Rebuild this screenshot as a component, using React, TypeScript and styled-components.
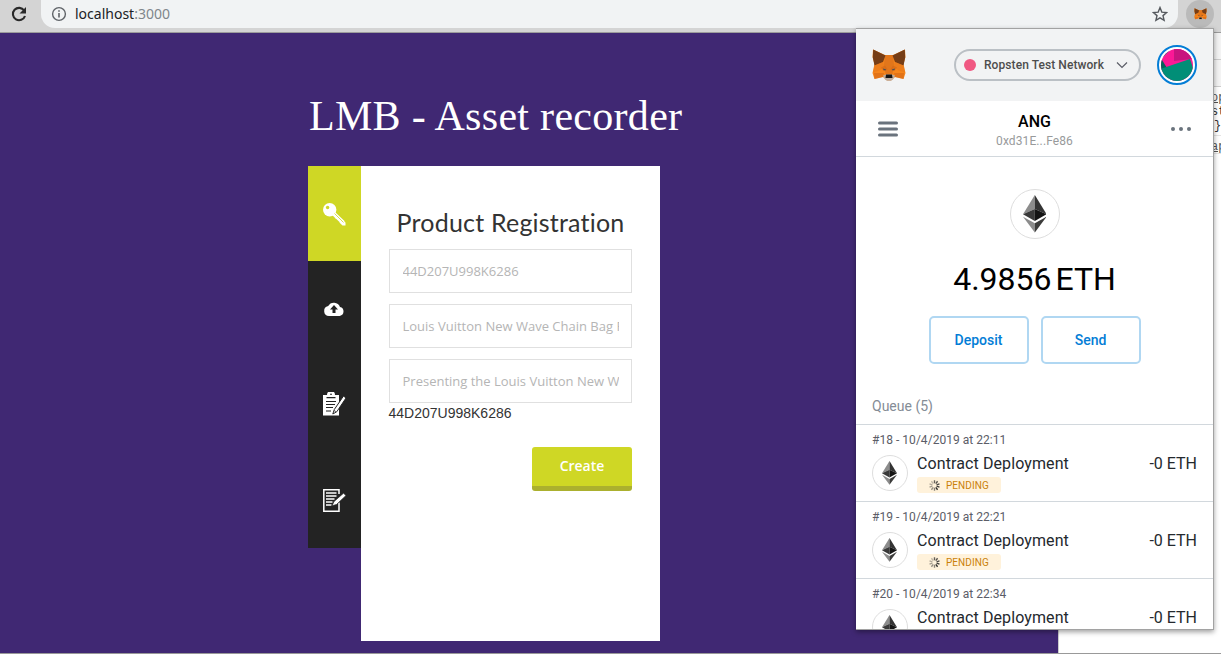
import React from "react";
import styled, { createGlobalStyle } from "styled-components";

const Global = createGlobalStyle`
  * { box-sizing: border-box; }
  body { margin: 0; background: #fff; overflow: hidden; }
  #root { height: 654px; }
`;

const Window = styled.div`
  position: relative;
  display: flex;
  flex-direction: column;
  width: 1221px;
  height: 654px;
  overflow: hidden;
`;

/* Browser toolbar */
const Toolbar = styled.header`
  display: flex;
  align-items: flex-start;
  height: 33px;
  flex: none;
  background: #d4d4d4;
  border-bottom: 1px solid #9c9c9c;
  padding-left: 10px;
`;
const Reload = styled.svg`
  width: 18px;
  height: 18px;
  margin: 5px 13px 0 0;
`;
const AddressBar = styled.div`
  display: flex;
  align-items: center;
  width: 1137px;
  height: 28px;
  padding: 0 10px;
  background: #f1f3f4;
  border-radius: 0 0 14px 14px;
  font: 14px/28px "Noto Sans", sans-serif;
  color: #202124;
  span { color: #80868b; }
  p { flex: 1; margin: 0 0 0 8px; }
`;
const ExtensionSlot = styled.div`
  display: flex;
  align-items: center;
  justify-content: center;
  width: 28px;
  height: 28px;
  margin-left: 8px;
  border-radius: 14px;
  background: #bababa;
`;

const Content = styled.div`
  display: flex;
  flex: 1;
  border-bottom: 1px solid #999;
`;

/* Web page */
const Page = styled.main`
  flex: none;
  width: 1058px;
  padding: 58px 0 0 308px;
  background: #402873;
`;
const PageTitle = styled.h1`
  margin: 0 0 0 1px;
  height: 75px;
  font: 400 42px/50px "Liberation Serif", serif;
  letter-spacing: 0.3px;
  color: #fff;
  white-space: nowrap;
`;
const Card = styled.section`
  display: flex;
  align-items: flex-start;
`;
const Tabs = styled.nav`
  width: 53px;
  height: 382px;
  background: #232323;
`;
const Tab = styled.div<{ $active?: boolean }>`
  display: flex;
  align-items: center;
  justify-content: center;
  height: ${(p) => (p.$active ? 95 : 95.6)}px;
  background: ${(p) => (p.$active ? "#cfd725" : "transparent")};
  svg { width: 24px; height: 24px; margin-right: 1px; }
`;
const Form = styled.form`
  display: flex;
  flex-direction: column;
  width: 299px;
  height: 475px;
  padding: 38px 28px 0;
  background: #fff;
`;
const FormTitle = styled.h2`
  margin: 0 0 9px;
  font: 400 25px/36px Lato, sans-serif;
  letter-spacing: 0.2px;
  color: #333;
  text-align: center;
  white-space: nowrap;
`;
const Field = styled.input`
  width: 243px;
  height: 44px;
  margin: 0 0 11px;
  padding: 0 12.5px;
  border: 1px solid #e0e0e0;
  background: #fff;
  font: 13px "Open Sans", sans-serif;
  &::placeholder { color: #b5b5b5; opacity: 1; }
`;
const Serial = styled.p`
  margin: -11px 0 0 -0.5px;
  font: 14px/20px "Liberation Sans", sans-serif;
  color: #333;
`;
const CreateButton = styled.button`
  align-self: flex-end;
  width: 100px;
  height: 44px;
  margin-top: 24px;
  padding: 0 0 2px;
  border: 0;
  border-bottom: 5px solid #abb02e;
  border-radius: 3px;
  background: #cfd725;
  color: #fff;
  font: 600 14px "Open Sans", sans-serif;
`;

/* Developer tools column */
const DevTools = styled.aside`
  flex: 1;
  border-left: 1px solid #ccc;
  background: #fff;
  font: 12px/13px "Liberation Mono", monospace;
  color: #333;
`;
const DevBar = styled.div`
  height: 27px;
  background: #f3f3f3;
  border-bottom: 1px solid #ccc;
`;
const DevEntry = styled.div<{ $height: number }>`
  height: ${(p) => p.$height}px;
  padding: 5px 0 0 152px;
  border-bottom: 1px solid #e4e4e4;
  white-space: nowrap;
  overflow: hidden;
  u { color: #555; }
  div { height: 14px; }
`;
const Brace = styled.div`
  padding-left: 3px;
`;

/* Wallet popup */
const Popup = styled.div`
  position: absolute;
  left: 856px;
  top: 28px;
  width: 358px;
  height: 602px;
  overflow: hidden;
  background: #fff;
  border: solid #a2a2a2;
  border-width: 1px 1px 1px 0;
  box-shadow: 0 2px 5px rgba(0, 0, 0, 0.38);
  font-family: Roboto, sans-serif;
`;
const PopupHeader = styled.div`
  display: flex;
  align-items: center;
  height: 72px;
  padding: 0 16px;
  background: #f2f3f4;
`;
const Network = styled.div`
  display: flex;
  align-items: center;
  width: 187px;
  height: 32px;
  margin-left: auto;
  padding: 0 11px 0 8px;
  border: 2px solid #bbc0c5;
  border-radius: 16px;
  font-size: 12px;
  font-weight: 500;
  letter-spacing: 0.07px;
  color: #4d4d4d;
  span { flex: 1; margin-left: 8px; white-space: nowrap; }
`;
const Dot = styled.i`
  width: 12px;
  height: 12px;
  border-radius: 50%;
  background: #f05882;
`;
const Avatar = styled.svg`
  width: 40px;
  height: 40px;
  margin-left: 16px;
`;
const AccountBar = styled.div`
  display: flex;
  align-items: center;
  justify-content: space-between;
  height: 56px;
  padding: 0 22px;
  border-bottom: 1px solid #d2d8dd;
`;
const Account = styled.div`
  padding-top: 4px;
  text-align: center;
  strong { display: block; font: 500 16px/20px Roboto, sans-serif; color: #000; }
  span { display: block; font-size: 12px; line-height: 18px; letter-spacing: 0.1px; color: #989a9b; }
`;
const Overview = styled.div`
  display: flex;
  flex-direction: column;
  align-items: center;
  height: 230px;
  padding-top: 32px;
`;
const Token = styled.div<{ $size: number }>`
  display: flex;
  align-items: center;
  justify-content: center;
  flex: none;
  width: ${(p) => p.$size}px;
  height: ${(p) => p.$size}px;
  border: 1px solid #dedede;
  border-radius: 50%;
  svg { height: ${(p) => (p.$size > 40 ? 78 : 70)}%; }
`;
const Balance = styled.div`
  margin: 21px 0 17px;
  font-size: 32px;
  line-height: 39px;
  word-spacing: -4px;
  color: #000;
`;
const Actions = styled.div`
  display: flex;
  gap: 12px;
`;
const Action = styled.button`
  width: 100px;
  height: 48px;
  padding: 0;
  border: 2px solid #b0d7f2;
  border-radius: 5px;
  background: #fff;
  color: #037dd6;
  font: 500 14px Roboto, sans-serif;
`;
const QueueTitle = styled.div`
  height: 37px;
  padding: 10px 16px 0;
  font-size: 14px;
  line-height: 18px;
  color: #848c96;
`;
const Transaction = styled.div`
  height: 77px;
  padding: 7px 16px 0;
  border-top: 1px solid #d2d8dd;
`;
const TxDate = styled.div`
  font-size: 12px;
  line-height: 16px;
  letter-spacing: 0.03px;
  color: #5b5d67;
`;
const TxRow = styled.div`
  display: flex;
  align-items: flex-start;
  padding-top: 7px;
`;
const TxInfo = styled.div`
  flex: 1;
  margin-left: 9px;
`;
const TxName = styled.div`
  height: 21px;
  margin-top: -1px;
  font-size: 16px;
  line-height: 20px;
  letter-spacing: 0.1px;
  color: #24292e;
`;
const TxAmount = styled(TxName)`
  letter-spacing: 0;
`;
const Pending = styled.div`
  display: flex;
  align-items: center;
  width: 84px;
  height: 16px;
  margin-top: 2px;
  padding-left: 12px;
  gap: 6px;
  border-radius: 3px;
  background: #fff2db;
  color: #ca810a;
  font-size: 10px;
  letter-spacing: 0.06px;
`;

const Fox = ({ width, height }: { width: number; height: number }) => (
  <svg width={width} height={height} viewBox="0 0 34 32">
    <path fill="#f6851b" d="M1 .5 13 6h8L33 .5 33.5 8 31.5 15 33.5 24 31.5 30 23 28l-4 3.5h-4L11 28l-8.5 2L.5 24l2-9L.5 8Z" />
    <path fill="#e2761b" d="M13 6h8l1 9-1.5 10h-7L12 15Z" />
    <path fill="#763d16" d="M1.2.5 13.5 6.5 11 13 2.5 16.5.8 8.5Zm31.6 0L20.500 6.5 23 13l8.500 3.500L33.200 8.500Z" />
    <path fill="#e4761b" d="m2.500 16.500 8.500-3.500 2 5-6 3.500-6 2Zm29 0L23 13l-2 5 6 3.500 6 2Z" opacity=".55" />
    <path fill="#cd6116" d="m9 18.500 4-2 2.500 4-4 1.500Zm16 0-4-2-2.500 4 4 1.500ZM2 24h10l-1 4-8.500 2Zm30 0H22l1 4 8.500 2Z" opacity=".5" />
    <path fill="#c0ad9e" d="m11 26.500 3-1h6l3 1-2 4-2 1.300h-4L13 30.500Z" />
    <path fill="#4c4f55" d="m11 19.500 3 .7-.6 1.300-1.900-.5Zm12 0-3 .7.6 1.300 1.900-.5Z" />
    <path fill="#161616" d="M14 25.500h6l.5 3.500h-7Z" />
  </svg>
);

const Ether = () => (
  <svg viewBox="0 0 24 38">
    <path fill="#8c8c8c" d="M12 0 0 19.5l12-5.4Z" />
    <path fill="#343434" d="m12 0 12 19.5-12-5.4Z" />
    <path fill="#393939" d="m0 19.5 12-5.4v12.4Z" />
    <path fill="#141414" d="m24 19.5-12-5.4v12.4Z" />
    <path fill="#8c8c8c" d="m0 22 12 6.7V38Z" />
    <path fill="#3c3c3b" d="m24 22-12 6.7V38Z" />
  </svg>
);

const Spinner = () => (
  <svg width="11" height="11" viewBox="-6 -6 12 12">
    {[0, 1, 2, 3, 4, 5, 6, 7, 8, 9].map((n) => (
      <path
        key={n}
        d="M0-2.4V-5.7"
        stroke="#222"
        strokeWidth="1.5"
        opacity={n < 5 ? 0.7 + n * 0.06 : 0.9 - n * 0.07}
        transform={`rotate(${n * 36})`}
      />
    ))}
  </svg>
);

const queue = [
  { nonce: 18, time: "22:11", status: "PENDING" },
  { nonce: 19, time: "22:21", status: "PENDING" },
  { nonce: 20, time: "22:34" },
];

export default function App() {
  return (
    <Window>
      <Global />
      <Toolbar>
        <Reload viewBox="0 0 18 18">
          <path d="M14.2 5.5A6.2 6.2 0 1 0 15 11" fill="none" stroke="#292929" strokeWidth="2.1" />
          <path d="M16 2v6.5H9.5Z" fill="#292929" />
        </Reload>
        <AddressBar>
          <svg width="16" height="16" viewBox="0 0 16 16">
            <circle cx="8" cy="8" r="6.4" fill="none" stroke="#5f6368" strokeWidth="1.4" />
            <path d="M8 7v4.5M8 4.2v1.6" stroke="#5f6368" strokeWidth="1.6" />
          </svg>
          <p>localhost<span>:3000</span></p>
          <svg width="16" height="16" viewBox="0 0 16 16">
            <path
              d="m8 1.6 1.8 4.5 4.8.4L11 9.6l1.1 4.7L8 11.8l-4.1 2.5L5 9.6 1.4 6.5l4.800-.4Z"
              fill="none"
              stroke="#55595e"
              strokeWidth="1.4"
            />
          </svg>
        </AddressBar>
        <ExtensionSlot>
          <Fox width={13} height={12} />
        </ExtensionSlot>
      </Toolbar>

      <Content>
        <Page>
          <PageTitle>LMB - Asset recorder</PageTitle>
          <Card>
            <Tabs>
              <Tab $active>
                <svg viewBox="0 0 24 24">
                  <path d="m10.500 10.500 10.800 10.300" stroke="#fff" strokeWidth="4.200" />
                  <path fill="#fff" d="m19 17.500 4.500 3v3h-3l-3-3Zm-8-5 3 4.500 2-1-3-5Z" />
                  <circle cx="7.700" cy="7.700" r="6.700" fill="#fff" />
                  <circle cx="5.600" cy="5.500" r="1.700" fill="#cfd725" />
                  <path d="m12.500 11.500 9 9" stroke="#cfd725" strokeWidth=".8" />
                </svg>
              </Tab>
              <Tab>
                <svg viewBox="0 0 24 24">
                  <path fill="#fff" d="M7 19a5 5 0 0 1-.8-9.9A6.5 6.5 0 0 1 18 10a4.6 4.6 0 0 1-.3 9Z" />
                  <path fill="#232323" d="m12 8 4 4.5h-2.5V16h-3v-3.5H8Z" />
                </svg>
              </Tab>
              <Tab>
                <svg viewBox="0 0 24 24">
                  <path fill="#fff" d="M1 3h4a4 4 0 0 1 8 0h4v20.500H1Z" />
                  <path fill="#232323" d="M8 1.700h2v1H8Z" />
                  <path d="M4.500 5.600h9M4 9.500h10M4 12.500h9M4 15.500h7M4 19h5" stroke="#232323" strokeWidth="1.200" />
                  <path d="m21.500 4-9.200 13.500-1.500 4.500 4-2.300L24 6Z" fill="#fff" stroke="#232323" strokeWidth="1" />
                  <path d="m12 18.500 2 1.200" stroke="#232323" strokeWidth=".7" />
                </svg>
              </Tab>
              <Tab>
                <svg viewBox="0 0 24 24">
                  <path d="M17 14.500v8.700H1.800V1.800H17V6" fill="none" stroke="#fff" strokeWidth="1.500" />
                  <path d="M4 5h10.500M4 8h10.500M4 11h8.500M4 14h6.500M4 17h5.500" stroke="#fff" strokeWidth="1.400" />
                  <path d="m21.500 5.200-9.500 8.300-2 4.300 4.500-1.300L24 7.500Z" fill="#fff" stroke="#232323" strokeWidth=".7" />
                </svg>
              </Tab>
            </Tabs>
            <Form onSubmit={(e) => e.preventDefault()}>
              <FormTitle>Product Registration</FormTitle>
              <Field placeholder="44D207U998K6286" />
              <Field placeholder="Louis Vuitton New Wave Chain Bag PM" />
              <Field placeholder="Presenting the Louis Vuitton New Wave" />
              <Serial>44D207U998K6286</Serial>
              <CreateButton>Create</CreateButton>
            </Form>
          </Card>
        </Page>
        <DevTools>
          <DevBar />
          <DevBar />
          <DevEntry $height={49}>
            <div><u>op</u></div>
            <div>st</div>
            <Brace>{"}"}</Brace>
          </DevEntry>
          <DevEntry $height={18}><u>ap</u></DevEntry>
        </DevTools>
      </Content>

      <Popup>
        <PopupHeader>
          <Fox width={34} height={32} />
          <Network>
            <Dot />
            <span>Ropsten Test Network</span>
            <svg width="12" height="8" viewBox="0 0 12 8">
              <path d="m1 1.5 5 5 5-5" fill="none" stroke="#5b5d67" strokeWidth="1.2" />
            </svg>
          </Network>
          <Avatar viewBox="0 0 40 40">
            <defs>
              <clipPath id="avatar-disc"><circle cx="20" cy="20" r="16" /></clipPath>
            </defs>
            <circle cx="20" cy="20" r="19" fill="#fff" stroke="#037dd6" strokeWidth="2" />
            <g clipPath="url(#avatar-disc)">
              <path fill="#fb1896" d="M0 0h40v40H0Z" />
              <path fill="#c8147f" d="M17 0h16l2 14-18 2Z" />
              <path fill="#03635a" d="m0 15 5 0 5 8-6 3Zm4-7 8-5 1 2-8 8Z" />
              <path fill="#018e77" d="M0 25 33 14l4 12v14H0Z" />
            </g>
          </Avatar>
        </PopupHeader>
        <AccountBar>
          <svg width="20" height="16" viewBox="0 0 20 16">
            <path d="M1.5 2h17M1.5 8h17M1.5 14h17" stroke="#6a737d" strokeWidth="3" strokeLinecap="round" />
          </svg>
          <Account>
            <strong>ANG</strong>
            <span>0xd31E...Fe86</span>
          </Account>
          <svg width="20" height="4" viewBox="0 0 20 4" fill="#6a737d">
            <circle cx="2" cy="2" r="2" />
            <circle cx="10" cy="2" r="2" />
            <circle cx="18" cy="2" r="2" />
          </svg>
        </AccountBar>
        <Overview>
          <Token $size={50}><Ether /></Token>
          <Balance>4.9856 ETH</Balance>
          <Actions>
            <Action>Deposit</Action>
            <Action>Send</Action>
          </Actions>
        </Overview>
        <QueueTitle>Queue (5)</QueueTitle>
        {queue.map((tx) => (
          <Transaction key={tx.nonce}>
            <TxDate>#{tx.nonce} - 10/4/2019 at {tx.time}</TxDate>
            <TxRow>
              <Token $size={36}><Ether /></Token>
              <TxInfo>
                <TxName>Contract Deployment</TxName>
                {tx.status && <Pending><Spinner />{tx.status}</Pending>}
              </TxInfo>
              <TxAmount>-0 ETH</TxAmount>
            </TxRow>
          </Transaction>
        ))}
      </Popup>
    </Window>
  );
}
